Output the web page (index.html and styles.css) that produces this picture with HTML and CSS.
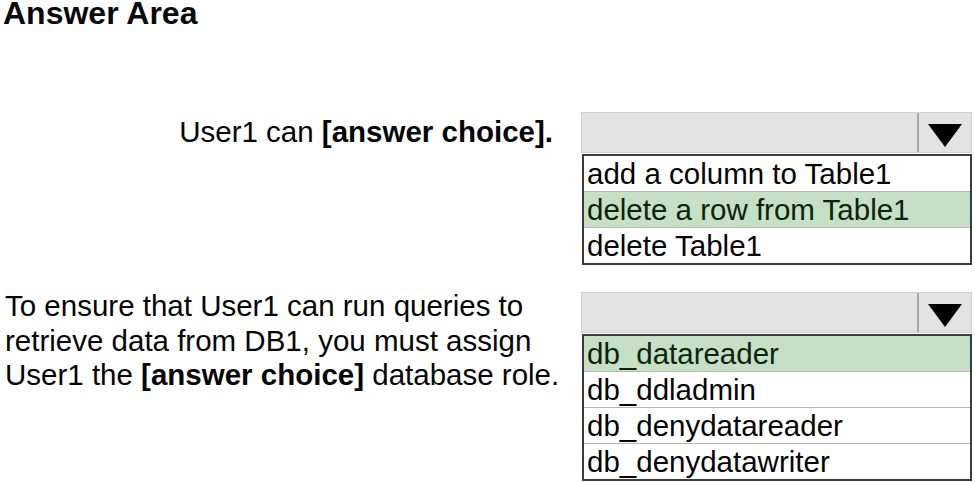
FILE: index.html
```html
<!DOCTYPE html>
<html lang="en">
<head>
<meta charset="utf-8">
<title>Answer Area</title>
<link rel="stylesheet" href="styles.css">
</head>
<body>
<div class="page">
  <h1 class="title">Answer Area</h1>

  <div class="question q1">
    <p class="label label-right">User1 can <b>[answer choice].</b></p>
    <div class="dropdown">
      <div class="select">
        <span class="select-value"></span>
        <span class="select-arrow">
          <svg width="34" height="23" viewBox="0 0 34 23" aria-hidden="true"><polygon points="0,0 34,0 17,23" fill="#000"/></svg>
        </span>
      </div>
      <ul class="options">
        <li>add a column to Table1</li>
        <li class="selected">delete a row from Table1</li>
        <li>delete Table1</li>
      </ul>
    </div>
  </div>

  <div class="question q2">
    <p class="label label-left">To ensure that User1 can run queries to<br>retrieve data from DB1, you must assign<br>User1 the <b>[answer choice]</b> database role.</p>
    <div class="dropdown dropdown-offset">
      <div class="select">
        <span class="select-value"></span>
        <span class="select-arrow">
          <svg width="34" height="23" viewBox="0 0 34 23" aria-hidden="true"><polygon points="0,0 34,0 17,23" fill="#000"/></svg>
        </span>
      </div>
      <ul class="options">
        <li class="selected">db_datareader</li>
        <li>db_ddladmin</li>
        <li>db_denydatareader</li>
        <li>db_denydatawriter</li>
      </ul>
    </div>
  </div>
</div>
</body>
</html>
```
FILE: styles.css
```css
html, body {
  margin: 0;
  padding: 0;
  background: #fff;
}

body {
  font-family: "Liberation Sans", Arial, sans-serif;
  color: #000;
  overflow: hidden;
}

.title {
  margin: 0;
  padding-left: 3px;
  font-size: 32px;
  line-height: 27px;
  font-weight: bold;
  color: #0a0a0a;
}

.question {
  display: grid;
  grid-template-columns: 581px 391px;
  align-items: start;
}

.q1 {
  margin-top: 85px;
}

.q2 {
  margin-top: 24px;
}

.label {
  margin: 0;
  font-size: 29.5px;
  line-height: 34.5px;
  white-space: nowrap;
  color: #050505;
}

.label b {
  font-weight: bold;
}

.label-right {
  text-align: right;
  padding-right: 28px;
  padding-top: 3px;
}

.label-left {
  padding-left: 5px;
}

.dropdown {
  width: 391px;
}

.dropdown-offset {
  margin-top: 3px;
}

.select {
  display: flex;
  height: 41px;
  box-sizing: border-box;
  border: 1px solid #cfcfcf;
  background: #e3e3e3;
}

.select-value {
  width: 335px;
  border-right: 2px solid #a8a8a8;
}

.select-arrow {
  flex: 1;
  display: flex;
  align-items: center;
  justify-content: center;
  padding-top: 6px;
}

.options {
  list-style: none;
  margin: 1px 0 0 1px;
  padding: 0;
  width: 390px;
  box-sizing: border-box;
  border: 2px solid #3c3c3c;
  background: #fff;
}

.options li {
  height: 35px;
  line-height: 36px;
  padding-left: 3px;
  font-size: 29.5px;
  white-space: nowrap;
  color: #050505;
}

.options li + li {
  border-top: 1px solid #b8b8b8;
}

.options .selected {
  background: #c5e0c5;
  color: #0c230c;
}
```
